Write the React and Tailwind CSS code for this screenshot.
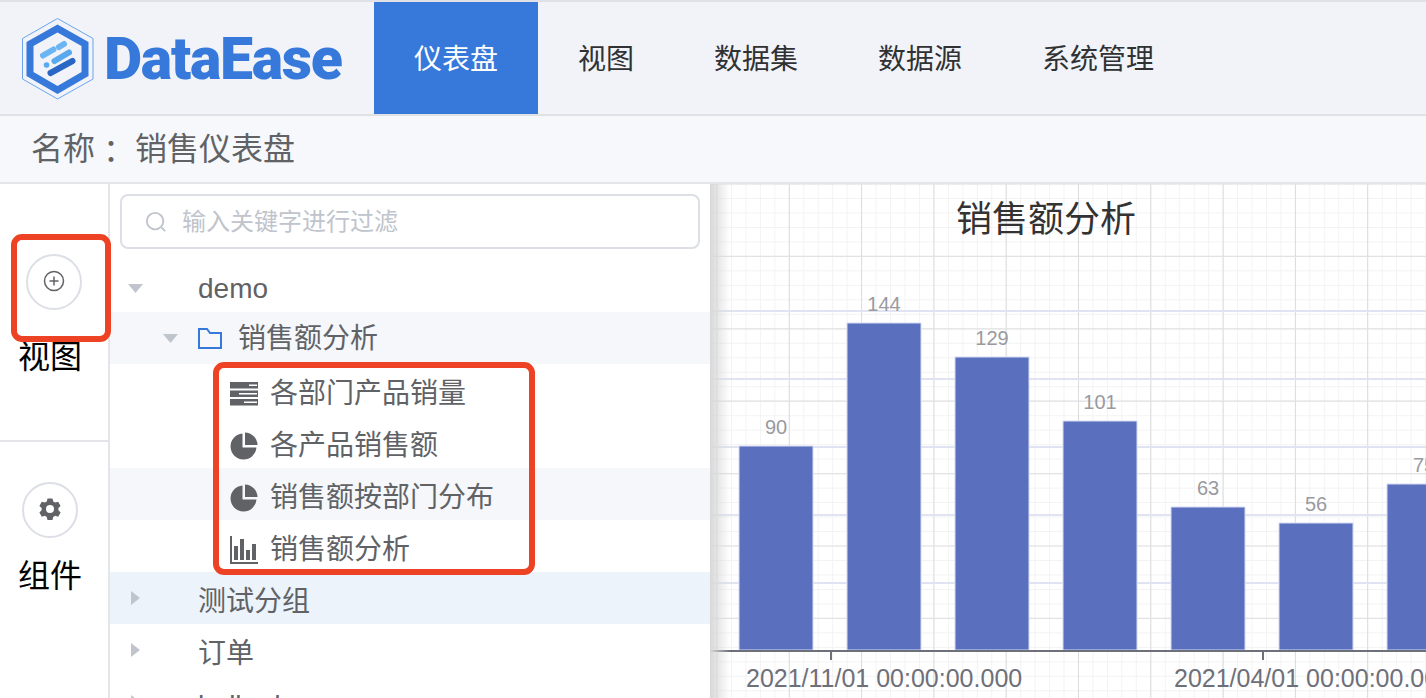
const CJK = { fontFamily: '"Liberation Sans", "Noto Sans CJK SC", sans-serif' };

const minorX = Array.from({ length: 50 }, (_, i) => 717 + i * 14.46);
const minorY = Array.from({ length: 36 }, (_, i) => 184 + i * 14.48);
const majorX = Array.from({ length: 10 }, (_, i) => 717 + i * 72.3);
const majorY = Array.from({ length: 7 }, (_, i) => 184 + i * 72.4);
const lav = [311, 379, 447, 515, 583];
const bars = [
  { x: 739, top: 446, v: 90 },
  { x: 847, top: 323, v: 144 },
  { x: 955, top: 357, v: 129 },
  { x: 1063, top: 421, v: 101 },
  { x: 1171, top: 507, v: 63 },
  { x: 1279, top: 523, v: 56 },
  { x: 1387, top: 484, v: 75 },
];

function Logo() {
  return (
    <svg width="72" height="82" viewBox="22 18 72 82" className="shrink-0">
      <polygon points="57.5,18.5 93,38.5 93,79 57.5,99 22.5,79 22.5,38.5" fill="none" stroke="#6aa5ec" strokeWidth="1" />
      <polygon points="57.5,28.5 85,44 85,74 57.5,90 30,74 30,44" fill="none" stroke="#3679db" strokeWidth="7" />
      <g strokeLinecap="round" fill="none">
        <line x1="43" y1="55.5" x2="53.5" y2="49.5" stroke="#6bb5f5" strokeWidth="6" />
        <line x1="59" y1="47" x2="64" y2="44" stroke="#6bb5f5" strokeWidth="6" />
        <line x1="46.5" y1="65" x2="46.6" y2="65" stroke="#5aa8ee" strokeWidth="5.5" />
        <line x1="54.5" y1="61" x2="69" y2="52.5" stroke="#5aa8ee" strokeWidth="6" />
        <line x1="50.5" y1="73" x2="72.5" y2="61" stroke="#2a66c4" strokeWidth="6" />
      </g>
    </svg>
  );
}

function Arrow({ open }) {
  return open ? (
    <svg width="15" height="9" viewBox="0 0 15 9" className="shrink-0"><polygon points="0,0 15,0 7.5,9" fill="#c0c4cc" /></svg>
  ) : (
    <svg width="9" height="14" viewBox="0 0 9 14" className="shrink-0"><polygon points="0,0 9,7 0,14" fill="#c0c4cc" /></svg>
  );
}

function BarsList() {
  return (
    <svg width="28" height="24" viewBox="0 0 28 24" className="shrink-0" fill="#606266">
      <rect x="0" y="0" width="28" height="6.500" />
      <rect x="0" y="8.500" width="28" height="6.500" />
      <rect x="0" y="17" width="28" height="6.500" />
      <rect x="19" y="2.500" width="8" height="1.500" fill="#fff" />
      <rect x="9" y="11" width="18" height="1.500" fill="#fff" />
      <rect x="14" y="19.500" width="13" height="1.500" fill="#fff" />
    </svg>
  );
}

function Pie() {
  return (
    <svg width="28" height="28" viewBox="0 0 28 28" className="shrink-0" fill="#606266">
      <path d="M12.500 1.500A13 13 0 1 0 26.500 15.500H12.500z" />
      <path d="M15 0.500A13 13 0 0 1 27.500 13H15z" />
    </svg>
  );
}

function BarChartIcon() {
  return (
    <svg width="28" height="28" viewBox="0 0 28 28" className="shrink-0" fill="#606266">
      <path d="M0 0h2v26h26v2H0z" />
      <rect x="4" y="10" width="4" height="14" />
      <rect x="10" y="3" width="4" height="21" />
      <rect x="16" y="14" width="4" height="10" />
      <rect x="22" y="8" width="4" height="16" />
    </svg>
  );
}

function Row({ children, className = '' }) {
  return <div className={`flex h-[52px] shrink-0 items-center text-[28px] leading-none text-[#606266] ${className}`}>{children}</div>;
}

function LeafRow({ icon, label, className = '' }) {
  return (
    <Row className={`pl-[120px] pt-[7px] ${className}`}>
      <span className="flex w-[40px] shrink-0 items-center">{icon}</span>
      <span>{label}</span>
    </Row>
  );
}

function Chart() {
  return (
    <svg className="block h-full w-full" viewBox="710 184 716 514" preserveAspectRatio="none" style={{ fontFamily: '"Liberation Sans", sans-serif' }}>
      <rect x="710" y="184" width="716" height="514" fill="#fff" />
      {minorX.map((x) => <line key={x} x1={x} x2={x} y1="184" y2="698" stroke="#f3f3f4" strokeWidth="1" />)}
      {minorY.map((y) => <line key={y} x1="710" x2="1426" y1={y} y2={y} stroke="#f3f3f4" strokeWidth="1" />)}
      {majorX.map((x) => <line key={x} x1={x} x2={x} y1="184" y2="698" stroke="#dcdcde" strokeWidth="1" />)}
      {majorY.map((y) => <line key={y} x1="710" x2="1426" y1={y} y2={y} stroke="#e2e2e4" strokeWidth="1.200" />)}
      {lav.map((y) => <line key={y} x1="710" x2="1426" y1={y} y2={y} stroke="#e0e4f2" strokeWidth="2" />)}
      {bars.map((b) => (
        <g key={b.x}>
          <rect x={b.x} y={b.top} width="74" height={650 - b.top} fill="#5a70bf" stroke="#d5dcf3" strokeWidth="1" />
          <text x={b.x + 37} y={b.top - 12} textAnchor="middle" fontSize="20" fill="#999aa0">{b.v}</text>
        </g>
      ))}
      <rect x="710" y="650" width="716" height="2" fill="#6e7079" />
      <rect x="830" y="652" width="2" height="8" fill="#6e7079" />
      <rect x="1262" y="652" width="2" height="8" fill="#6e7079" />
      <text x="746" y="687" fontSize="25" fill="#6e7079">2021/11/01 00:00:00.000</text>
      <text x="1174" y="687" fontSize="25" fill="#6e7079">2021/04/01 00:00:00.000</text>
    </svg>
  );
}

export default function App() {
  return (
    <div className="flex h-[698px] w-[1426px] flex-col overflow-hidden bg-white" style={CJK}>
      <header className="flex h-[116px] shrink-0 border-y-2 border-[#dfe1e6] bg-[#f1f3f8]">
        <div className="flex w-[374px] shrink-0 items-center pl-[22px] pt-[1px]">
          <Logo />
          <span className="ml-[10px] text-[59px] font-black leading-none tracking-[-1.3px] text-[#3679db]" style={{ fontFamily: 'Roboto, sans-serif' }}>DataEase</span>
        </div>
        <nav className="flex text-[28px] leading-none text-[#303133]">
          <div className="flex items-center bg-[#3679db] px-10 pt-1 text-white">仪表盘</div>
          <div className="flex items-center px-10 pt-1">视图</div>
          <div className="flex items-center px-10 pt-1">数据集</div>
          <div className="flex items-center px-10 pt-1">数据源</div>
          <div className="flex items-center px-10 pt-1">系统管理</div>
        </nav>
      </header>
      <div className="flex h-[68px] shrink-0 items-center border-b-2 border-[#e4e5e9] bg-[#f7f8fb] pl-[31px] text-[32px] leading-none text-[#606266]">
        <span>名称</span>
        <span style={{ fontFamily: '"Noto Sans CJK TC", sans-serif' }}>：</span>
        <span className="ml-[8px]">销售仪表盘</span>
      </div>
      <main className="flex min-h-0 flex-1">
        <aside className="flex w-[110px] shrink-0 flex-col border-r-2 border-[#e4e5e9]">
          <div className="relative z-10 flex h-[258px] shrink-0 flex-col items-center border-b-2 border-[#e4e5e9] pt-[70px]">
            <div className="flex h-[56px] w-[56px] items-center justify-center rounded-full border-2 border-[#dcdfe6] bg-white pb-[2px]">
              <svg width="22" height="22" viewBox="0 0 22 22" fill="none" stroke="#606266" strokeWidth="1.500">
                <circle cx="11" cy="11" r="9.500" />
                <path d="M11 6.500v9M6.500 11h9" />
              </svg>
            </div>
            <span className="mr-[8px] mt-[31px] text-[32px] leading-none text-black">视图</span>
            <div className="absolute left-[11px] top-[50px] h-[108px] w-[100px] rounded-[11px] border-[6px] border-[#ee4225]" />
          </div>
          <div className="flex flex-1 flex-col items-center pt-[40px] pr-[8px]">
            <div className="flex h-[56px] w-[56px] items-center justify-center rounded-full border-2 border-[#dcdfe6] bg-white pb-[2px]">
              <svg width="24" height="24" viewBox="0 0 24 24" fill="#606266">
                <path fillRule="evenodd" d="M9.500 1.500h5l.7 3 2 1.100 3-.9 2.400 4.300-2.200 2.100v2.200l2.200 2.100-2.400 4.300-3-.9-2 1.100-.7 3h-5l-.7-3-2-1.100-3 .9L1.400 15.400l2.200-2.100v-2.200L1.400 9l2.400-4.300 3 .9 2-1.100zM12 8a4 4 0 1 0 0 8 4 4 0 0 0 0-8z" />
              </svg>
            </div>
            <span className="mt-[22px] text-[32px] leading-none text-black">组件</span>
          </div>
        </aside>
        <section className="relative flex w-[600px] shrink-0 flex-col overflow-hidden">
          <div className="px-[10px] pt-[10px] pb-[11px]">
            <div className="flex h-[55px] items-center rounded-lg border-2 border-[#dcdfe6] pl-[23px] text-[24px] leading-none text-[#c0c4cc]">
              <svg width="22" height="22" viewBox="0 0 24 24" fill="none" stroke="#c0c4cc" strokeWidth="2" className="mr-[15px] shrink-0">
                <circle cx="11" cy="11" r="9" />
                <path d="M18 18l4 4" />
              </svg>
              输入关键字进行过滤
            </div>
          </div>
          <Row className="pl-[18px] pt-[5px]"><Arrow open /><span className="ml-[55px]">demo</span></Row>
          <Row className="bg-[#f5f7fa] pl-[53px]">
            <Arrow open />
            <svg width="24" height="21" viewBox="0 0 24 21" fill="none" stroke="#3679db" strokeWidth="2" className="ml-[20px] shrink-0">
              <path d="M1 20V1h8l3 4h11v15z" />
            </svg>
            <span className="ml-[16px] mt-[2px]">销售额分析</span>
          </Row>
          <LeafRow icon={<BarsList />} label="各部门产品销量" />
          <LeafRow icon={<Pie />} label="各产品销售额" />
          <LeafRow icon={<Pie />} label="销售额按部门分布" className="bg-[#f5f7fa]" />
          <LeafRow icon={<BarChartIcon />} label="销售额分析" />
          <Row className="bg-[#ecf3fb] pl-[21px]"><Arrow /><span className="ml-[58px] mt-[8px]">测试分组</span></Row>
          <Row className="pl-[21px]"><Arrow /><span className="ml-[58px] mt-[8px]">订单</span></Row>
          <Row className="pl-[21px]"><Arrow /><span className="ml-[58px] mt-[8px]">hello dev</span></Row>
          <div className="absolute left-[103px] top-[178px] h-[213px] w-[322px] rounded-[11px] border-[6px] border-[#ee4225]" />
        </section>
        <section className="relative min-w-0 flex-1 overflow-hidden">
          <Chart />
          <div className="absolute inset-y-0 left-0 w-[20px] bg-gradient-to-r from-[#d8d8d8] to-transparent" />
          <div className="absolute left-[246px] top-[18px] text-[36px] leading-none text-[#333]">销售额分析</div>
        </section>
      </main>
    </div>
  );
}
